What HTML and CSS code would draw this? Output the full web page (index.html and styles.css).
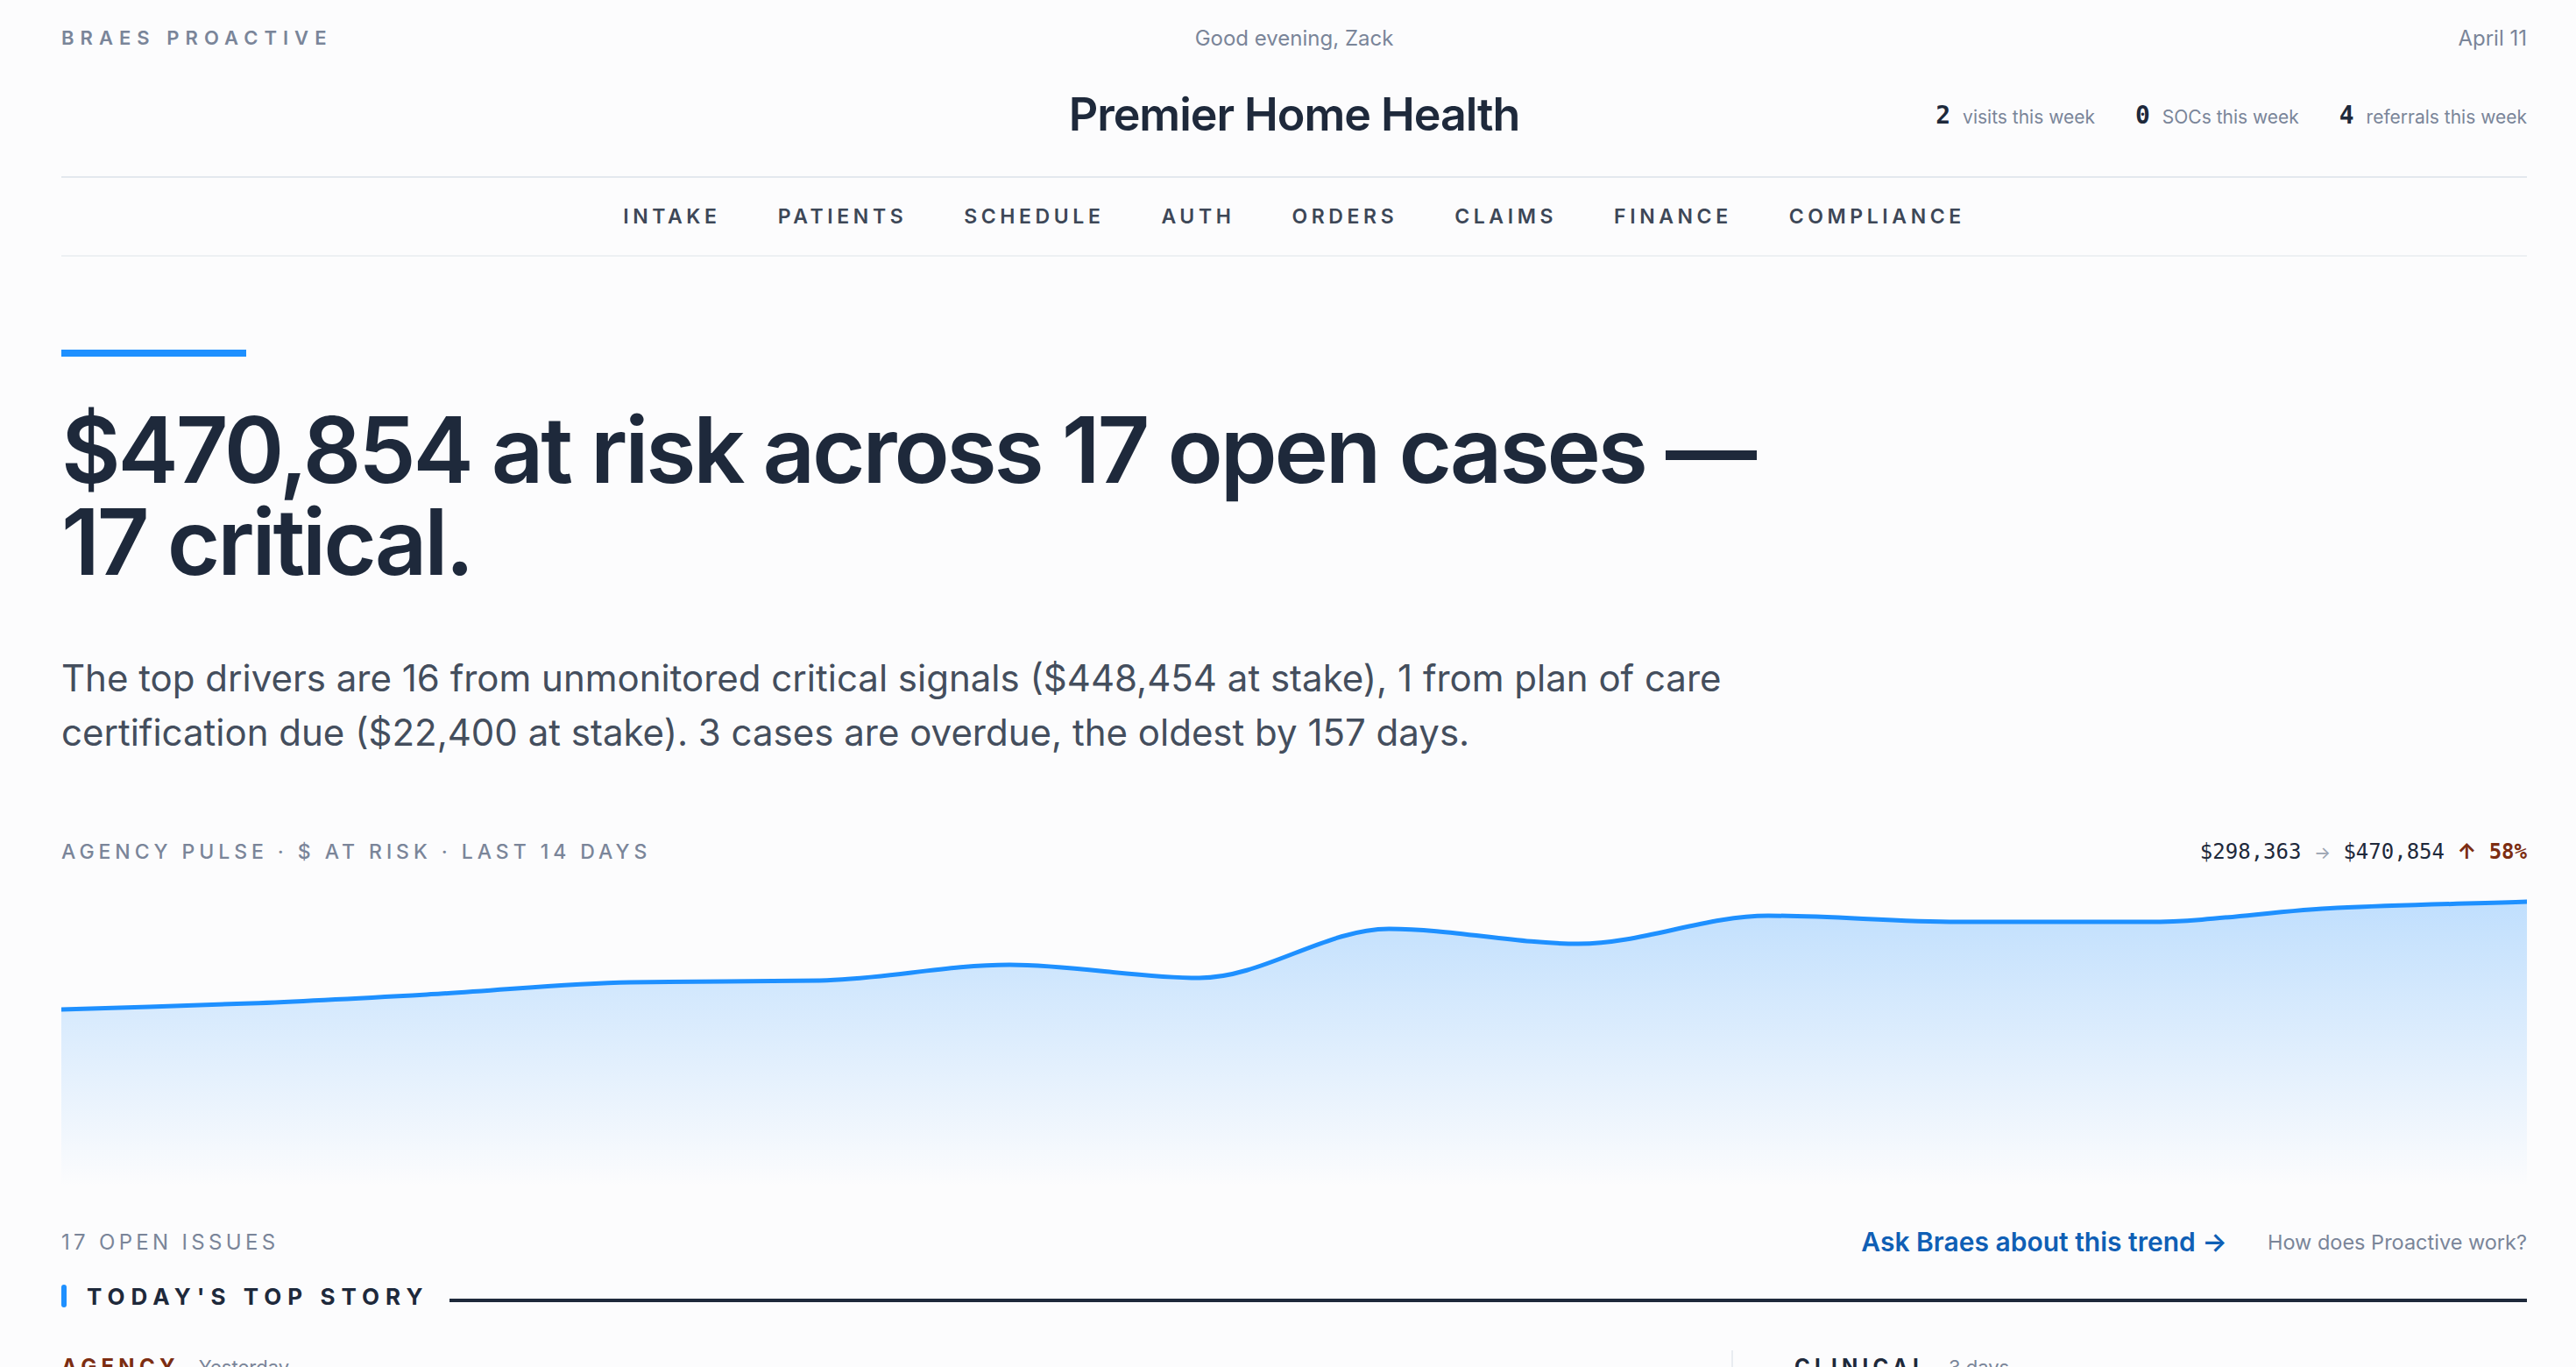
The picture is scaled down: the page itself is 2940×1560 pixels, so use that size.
FILE: index.html
```html
<!DOCTYPE html>
<html>
<head>
<title>Braes Proactive - Premier Home Health</title>
<link rel="stylesheet" href="styles.css">
</head>
<body>
<div class="page">
    <header class="masthead">
        <div class="topline">
            <span class="brand">BRAES PROACTIVE</span>
            <span class="greeting">Good evening, Zack</span>
            <span class="date">April 11</span>
        </div>
        <div class="titlerow">
            <div></div>
            <h1 class="agency">Premier Home Health</h1>
            <div class="stats">
                <span class="stat"><b>2</b> visits this week</span>
                <span class="stat"><b>0</b> SOCs this week</span>
                <span class="stat"><b>4</b> referrals this week</span>
            </div>
        </div>
    </header>

    <nav class="mainnav">
        <a href="#">INTAKE</a>
        <a href="#">PATIENTS</a>
        <a href="#">SCHEDULE</a>
        <a href="#">AUTH</a>
        <a href="#">ORDERS</a>
        <a href="#">CLAIMS</a>
        <a href="#">FINANCE</a>
        <a href="#">COMPLIANCE</a>
    </nav>

    <section class="hero">
        <div class="hero-bar"></div>
        <h2 class="headline">$470,854 at risk across 17 open cases — 17 critical.</h2>
        <p class="summary">The top drivers are 16 from unmonitored critical signals ($448,454 at stake), 1 from plan of care certification due ($22,400 at stake). 3 cases are overdue, the oldest by 157 days.</p>
    </section>

    <section class="pulse">
        <div class="pulse-head">
            <span class="pulse-label">AGENCY PULSE · $ AT RISK · LAST 14 DAYS</span>
            <span class="pulse-delta">$298,363 <i>→</i> $470,854 <em><span class="up">↑</span> 58%</em></span>
        </div>
        <svg class="pulse-chart" viewBox="0 0 2814 345" preserveAspectRatio="none">
            <defs>
                <linearGradient id="pulsefill" x1="0" y1="0" x2="0" y2="1">
                    <stop offset="0" stop-color="#1e90ff" stop-opacity="0.27"/>
                    <stop offset="1" stop-color="#1e90ff" stop-opacity="0"/>
                </linearGradient>
            </defs>
            <path fill="url(#pulsefill)" d="M0,143 C72.2,140.7 144.3,138.9 216.5,136 C288.6,133.1 360.8,129 432.9,125 C505.1,121 577.2,113.2 649.4,112 C721.5,110.8 793.7,111.2 865.8,110 C938,108.8 1010.2,92 1082.3,92 C1154.5,92 1226.6,107 1298.8,107 C1370.9,107 1443.1,51 1515.2,51 C1587.4,51 1659.6,68 1731.7,68 C1803.9,68 1876,36 1948.2,36 C2020.3,36 2092.5,43 2164.6,43 C2236.8,43 2309,43 2381.1,43 C2453.3,43 2525.4,30.2 2597.6,27 C2669.7,23.8 2741.9,22.3 2814,20 L2814,345 L0,345 Z"/>
            <path fill="none" stroke="#1e90ff" stroke-width="5" stroke-linecap="round" d="M0,143 C72.2,140.7 144.3,138.9 216.5,136 C288.6,133.1 360.8,129 432.9,125 C505.1,121 577.2,113.2 649.4,112 C721.5,110.8 793.7,111.2 865.8,110 C938,108.8 1010.2,92 1082.3,92 C1154.5,92 1226.6,107 1298.8,107 C1370.9,107 1443.1,51 1515.2,51 C1587.4,51 1659.6,68 1731.7,68 C1803.9,68 1876,36 1948.2,36 C2020.3,36 2092.5,43 2164.6,43 C2236.8,43 2309,43 2381.1,43 C2453.3,43 2525.4,30.2 2597.6,27 C2669.7,23.8 2741.9,22.3 2814,20"/>
        </svg>
    </section>

    <div class="issues-row">
        <span class="issues-count">17 OPEN ISSUES</span>
        <div class="issues-links">
            <a class="ask" href="#">Ask Braes about this trend →</a>
            <a class="how" href="#">How does Proactive work?</a>
        </div>
    </div>

    <div class="section-head">
        <span class="section-mark"></span>
        <span class="section-title">TODAY'S TOP STORY</span>
        <span class="section-rule"></span>
    </div>

    <div class="stories">
        <div class="story">
            <div class="story-meta"><span class="kind kind-agency">AGENCY</span><span class="when">Yesterday</span></div>
        </div>
        <div class="story story-side">
            <div class="story-meta"><span class="kind">CLINICAL</span><span class="when">3 days</span></div>
        </div>
    </div>
</div>
</body>
</html>
```

FILE: styles.css
```css
body {
    margin: 0;
    background-color: #fcfcfd;
    color: #1e293b;
    font-family: Inter, "Liberation Sans", sans-serif;
}
a {
    text-decoration: none;
}
.page {
    padding: 0 56px 0 70px;
}

/* masthead */
.masthead {
    padding-top: 28px;
}
.topline {
    display: grid;
    grid-template-columns: 1fr auto 1fr;
    align-items: center;
    font-size: 24px;
    line-height: 31px;
    color: #7a8599;
}
.brand {
    font-size: 22px;
    font-weight: 600;
    letter-spacing: 0.32em;
}
.date {
    text-align: right;
}
.titlerow {
    display: grid;
    grid-template-columns: 1fr auto 1fr;
    align-items: center;
    margin-top: 41px;
    padding-bottom: 39px;
    border-bottom: 2px solid #e3e8ee;
}
.agency {
    margin: 0;
    font-size: 52px;
    line-height: 62px;
    font-weight: 600;
    letter-spacing: -0.02em;
    color: #1e293b;
}
.stats {
    display: flex;
    justify-content: flex-end;
    gap: 46px;
    font-size: 21px;
    color: #7a8599;
}
.stat b {
    font-family: "DejaVu Sans Mono", "Liberation Mono", monospace;
    font-size: 28px;
    color: #1e293b;
    margin-right: 8px;
}

/* nav */
.mainnav {
    display: flex;
    justify-content: center;
    align-items: center;
    gap: 65px;
    height: 88px;
    border-bottom: 2px solid #edf0f3;
}
.mainnav a {
    font-size: 23px;
    font-weight: 600;
    letter-spacing: 0.2em;
    color: #3d4757;
}

/* hero */
.hero {
    padding-top: 106px;
}
.hero-bar {
    width: 211px;
    height: 8px;
    background-color: #1e90ff;
}
.headline {
    margin: 54px 0 0;
    max-width: 2000px;
    font-size: 104px;
    line-height: 105px;
    font-weight: 600;
    letter-spacing: -0.03em;
    color: #1e293b;
}
.summary {
    margin: 72px 0 0;
    max-width: 2060px;
    font-size: 42px;
    line-height: 62px;
    color: #444e5d;
}

/* pulse chart */
.pulse {
    margin-top: 90px;
}
.pulse-head {
    display: flex;
    justify-content: space-between;
    align-items: baseline;
}
.pulse-label {
    font-size: 23px;
    line-height: 30px;
    font-weight: 500;
    letter-spacing: 0.215em;
    color: #7a8599;
}
.pulse-delta {
    font-family: "DejaVu Sans Mono", "Liberation Mono", monospace;
    font-size: 24px;
    color: #1e293b;
}
.pulse-delta i {
    font-family: Inter, sans-serif;
    font-style: normal;
    color: #9aa3b1;
    font-size: 20px;
}
.pulse-delta em {
    font-style: normal;
    font-weight: bold;
    color: #7c2d12;
}
.pulse-delta .up {
    font-family: Inter, sans-serif;
    font-size: 24px;
}
.pulse-chart {
    display: block;
    width: 100%;
    height: 345px;
    margin-top: 22px;
}

/* issues row */
.issues-row {
    display: flex;
    justify-content: space-between;
    align-items: center;
    margin-top: 45px;
    height: 36px;
}
.issues-count {
    font-size: 24px;
    letter-spacing: 0.18em;
    color: #7a8599;
}
.issues-links {
    display: flex;
    align-items: center;
    gap: 46px;
}
.ask {
    font-size: 30px;
    font-weight: 600;
    color: #0f5fb5;
}
.how {
    font-size: 23.5px;
    color: #7a8599;
}

/* section head */
.section-head {
    display: flex;
    align-items: center;
    margin-top: 30px;
    height: 28px;
}
.section-mark {
    width: 6px;
    height: 26px;
    border-radius: 3px;
    background-color: #1e90ff;
    margin-right: 23px;
}
.section-title {
    font-size: 26px;
    font-weight: 700;
    letter-spacing: 0.27em;
    color: #1e293b;
}
.section-rule {
    flex: 1;
    height: 4px;
    margin: 10px 0 0 24px;
    background-color: #1e293b;
}

/* stories */
.stories {
    display: grid;
    grid-template-columns: 1fr 908px;
    margin-top: 48px;
    min-height: 400px;
}
.story-side {
    border-left: 2px solid #e8ecf1;
    padding-left: 70px;
}
.story-meta {
    display: flex;
    align-items: baseline;
    gap: 22px;
    padding-top: 4px;
}
.kind {
    font-size: 24px;
    font-weight: 700;
    letter-spacing: 0.22em;
    color: #1e293b;
}
.kind-agency {
    color: #7c2d12;
}
.when {
    font-size: 22px;
    color: #7a8599;
}
```
